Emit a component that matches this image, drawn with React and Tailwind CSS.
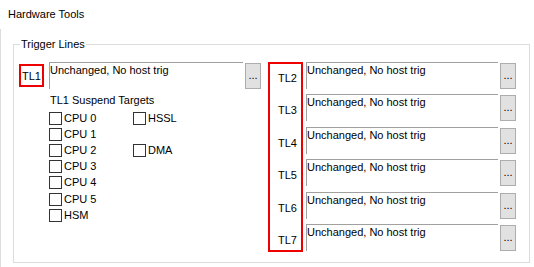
import React from "react";

const cpuTargets = ["CPU 0", "CPU 1", "CPU 2", "CPU 3", "CPU 4", "CPU 5", "HSM"];
const otherTargets = { 0: "HSSL", 2: "DMA" };
const rightLines = ["TL2", "TL3", "TL4", "TL5", "TL6", "TL7"];

function TextBox({ width }) {
  return (
    <div
      className={`${width} h-[27px] border-t border-l border-[#a0a0a0] bg-white pt-[1px] leading-[13px] whitespace-nowrap overflow-hidden`}
    >
      Unchanged, No host trig
    </div>
  );
}

function DotsButton() {
  return (
    <div className="ml-[2px] mt-[1px] w-[16px] h-[26px] border border-[#adadad] bg-[#e1e1e1] pt-[5px] text-center leading-[13px]">
      ...
    </div>
  );
}

function Check({ label }) {
  return (
    <div className="flex items-center h-[16.2px]">
      <div className="w-[13px] h-[13px] border border-[#333333] bg-white" />
      <span className="ml-[2px] leading-[13px]">{label}</span>
    </div>
  );
}

export default function App() {
  return (
    <div className="w-[534px] h-[267px] bg-white overflow-hidden font-['Liberation_Sans',Arial,sans-serif] text-[11px] text-black">
      <div className="h-[29px] pl-[8px] pt-[8px] leading-[13px]">Hardware Tools</div>
      <div className="h-[238px] border-l border-[#dcdcdc] pl-[12px] pt-[15px]">
        <div className="relative w-[517px] h-[219px] border border-[#dcdcdc]">
          <span className="absolute left-[6px] top-[-7px] px-[1px] bg-white leading-[13px]">
            Trigger Lines
          </span>
          <div className="flex pl-[5px] pt-[17px] gap-[7px]">
            {/* left column: TL1 */}
            <div className="w-[242px]">
              <div className="flex items-start">
                <div className="mt-[2px] w-[25px] h-[23px] border-2 border-[#ee0000] pt-[4px] pr-[1px] text-right leading-[13px]">
                  TL1
                </div>
                <div className="ml-[5px]">
                  <TextBox width="w-[194px]" />
                </div>
                <DotsButton />
              </div>
              <div className="pl-[30px]">
                <div className="mt-[5px] pl-[1px] leading-[13px]">TL1 Suspend Targets</div>
                <div className="mt-[3px] flex">
                  <div className="w-[84px]">
                    {cpuTargets.map((t) => (
                      <Check key={t} label={t} />
                    ))}
                  </div>
                  <div>
                    {cpuTargets.map((_, i) =>
                      otherTargets[i] ? (
                        <Check key={i} label={otherTargets[i]} />
                      ) : (
                        <div key={i} className="h-[16.2px]" />
                      )
                    )}
                  </div>
                </div>
              </div>
            </div>

            {/* right column: TL2..TL7 */}
            <div className="relative">
              {rightLines.map((tl) => (
                <div key={tl} className="flex items-start h-[32.4px]">
                  <div className="w-[35px] pt-[10px] pr-[6px] text-right leading-[13px]">{tl}</div>
                  <div className="ml-[3px]">
                    <TextBox width="w-[192px]" />
                  </div>
                  <DotsButton />
                </div>
              ))}
              <div className="absolute left-0 top-0 w-[35px] h-[190px] border-2 border-[#ee0000] pointer-events-none" />
            </div>
          </div>
        </div>
      </div>
    </div>
  );
}
